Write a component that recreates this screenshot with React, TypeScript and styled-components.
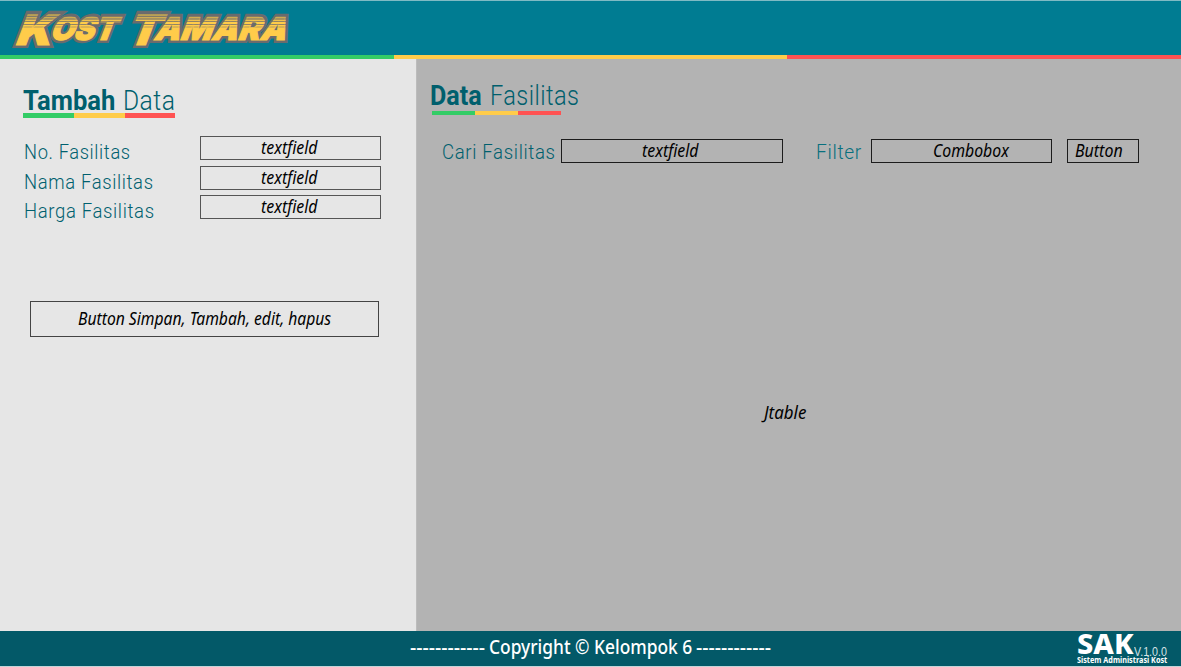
import React, { useLayoutEffect, useRef, useState } from 'react';
import styled, { createGlobalStyle } from 'styled-components';

const gothic = "Roboto, 'Liberation Sans', sans-serif";
const humanist = "'Noto Sans', 'Open Sans', sans-serif";

const GlobalStyle = createGlobalStyle`
  *, *::before, *::after { box-sizing: border-box; }
  html, body { margin: 0; padding: 0; background: #e6e6e6; }
`;

/* Sets a line of type condensed or expanded to a given measure. */
const Measure = styled.span<{ $w: number }>`
  display: block;
  flex: none;
  width: ${(p) => p.$w}px;
  white-space: nowrap;
`;

const Stretched = styled.span`
  display: inline-block;
  vertical-align: top;
  transform-origin: 0 50%;
`;

function Fit({ w, children }: { w: number; children: React.ReactNode }) {
  const ref = useRef<HTMLSpanElement>(null);
  const [scale, setScale] = useState(1);
  useLayoutEffect(() => {
    const update = () => {
      if (ref.current) setScale(w / ref.current.offsetWidth);
    };
    update();
    document.fonts?.ready.then(update);
  }, [w]);
  return (
    <Measure $w={w}>
      <Stretched ref={ref} style={{ transform: `scaleX(${scale})` }}>
        {children}
      </Stretched>
    </Measure>
  );
}

const Page = styled.div`
  width: 1181px;
  height: 667px;
  display: flex;
  flex-direction: column;
  overflow: hidden;
`;

const Header = styled.header`
  height: 55px;
  flex: none;
  background: #007c92;
  border-top: 1px solid #7fbac4;
`;

const Tricolor = styled.div<{ $w: number; $h: number }>`
  flex: none;
  width: ${(p) => p.$w}px;
  height: ${(p) => p.$h}px;
  display: grid;
  grid-template-columns: 1fr 1fr 1fr;
`;

const Band = styled.i<{ $c: string }>`
  background: ${(p) => p.$c};
`;

function Stripe({ w, h }: { w: number; h: number }) {
  return (
    <Tricolor $w={w} $h={h}>
      <Band $c="#33cc66" />
      <Band $c="#ffcc4a" />
      <Band $c="#ff5252" />
    </Tricolor>
  );
}

const Body = styled.main`
  height: 572px;
  flex: none;
  display: flex;
`;

const FormPanel = styled.section`
  width: 416px;
  flex: none;
  padding: 26px 0 0 23px;
  background: #e6e6e6;
`;

const DataPanel = styled.section`
  flex: 1;
  padding: 22px 0 0 12.5px;
  background: #b3b3b3;
  border-left: 1px solid #bcbcbc;
`;

const Title = styled.h1<{ $gap: number; $line?: number }>`
  height: 28px;
  margin: 0;
  display: flex;
  gap: ${(p) => p.$gap}px;
  font: 300 27px/${(p) => p.$line ?? 32}px ${gothic};
  letter-spacing: 0.5px;
  color: #005f6d;
`;

const Strong = styled.b`
  font-weight: 700;
  letter-spacing: 0;
`;

const Underline = styled.div<{ $top?: number; $left?: number }>`
  padding: ${(p) => p.$top ?? 0}px 0 0 ${(p) => p.$left ?? 0}px;
`;

const Fields = styled.div`
  margin-top: 18px;
  display: flex;
  flex-direction: column;
  gap: 5.5px;
`;

const FieldRow = styled.div`
  height: 24px;
  display: grid;
  grid-template-columns: 177.4px 181px;
`;

const Label = styled.label<{ $top?: number; $c?: string }>`
  padding: ${(p) => p.$top ?? 4}px 0 0 1px;
  font: 300 20px/24px ${gothic};
  letter-spacing: 0.7px;
  color: ${(p) => p.$c ?? '#00606e'};
`;

const Box = styled.div<{ $w: number; $h?: number; $line: number; $c?: string }>`
  width: ${(p) => p.$w}px;
  height: ${(p) => p.$h ?? 24}px;
  flex: none;
  display: flex;
  justify-content: center;
  border: 1px solid ${(p) => p.$c ?? '#1c1c1c'};
  font: italic 400 17.3px/${(p) => p.$line}px ${humanist};
  color: #000;
`;

const Actions = styled.div`
  padding: 82px 0 0 7px;
`;

const Toolbar = styled.div`
  height: 24px;
  margin: 24px 0 0 11.5px;
  display: flex;
`;

const Spacer = styled.span<{ $w: number }>`
  flex: none;
  width: ${(p) => p.$w}px;
`;

const TableArea = styled.div`
  height: 460px;
  padding: 238px 0 0 334px;
  font: italic 400 17.3px/24px ${humanist};
  color: #000;
`;

const Footer = styled.footer`
  height: 36px;
  flex: none;
  display: flex;
  padding-left: 410px;
  background: #035968;
  border-bottom: 1px solid #c3d4d8;
  color: #fff;
`;

const Copyright = styled.p`
  margin: 0;
  display: flex;
  gap: 4px;
  font: 500 19.5px/31px ${humanist};
`;

const Brand = styled.div`
  margin-left: 306px;
  padding-top: 2px;
`;

const BrandLine = styled.div`
  height: 22px;
  display: flex;
`;

const Sak = styled.span`
  font: 800 28px/20px ${humanist};
`;

const Version = styled.span`
  padding-top: 13px;
  font: 400 12px/12px 'Liberation Sans', Arial, sans-serif;
  color: #d5e3e6;
`;

const Tagline = styled.div`
  font: 700 8px/10px ${humanist};
`;

const LogoSvg = styled.svg`
  display: block;
`;

const bands = [14, 16.7, 19.4, 22.1, 24.8, 27.3];

function LogoWords() {
  return (
    <g
      fontFamily="Inter, 'Liberation Sans', sans-serif"
      fontWeight="900"
      strokeLinejoin="miter"
      transform="translate(0 45) skewX(-21) translate(0 -45)"
    >
      <text x="14" y="45" fontSize="43" textLength="36" lengthAdjust="spacingAndGlyphs">K</text>
      <text x="47" y="40" fontSize="32" textLength="65" lengthAdjust="spacingAndGlyphs">OST</text>
      <text x="125.5" y="45" fontSize="43" textLength="31" lengthAdjust="spacingAndGlyphs">T</text>
      <text x="151" y="40" fontSize="32" textLength="132" lengthAdjust="spacingAndGlyphs">AMARA</text>
    </g>
  );
}

function Logo() {
  return (
    <LogoSvg width="300" height="54" viewBox="0 1 300 54" role="img" aria-label="Kost Tamara">
      <defs>
        <linearGradient id="gold" gradientUnits="userSpaceOnUse" x1="0" y1="13" x2="0" y2="22">
          <stop offset="0" stopColor="#a08f5a" />
          <stop offset="1" stopColor="#ffcc4a" />
        </linearGradient>
        <clipPath id="bands">
          {bands.map((y) => (
            <rect key={y} x="0" y={y} width="300" height="1.9" />
          ))}
          <rect x="0" y="29.2" width="300" height="20" />
        </clipPath>
      </defs>
      <g fill="#6b6b6d" stroke="#6b6b6d" strokeWidth="6">
        <LogoWords />
      </g>
      <g clipPath="url(#bands)">
        <g fill="url(#gold)" stroke="url(#gold)" strokeWidth="1">
          <LogoWords />
        </g>
      </g>
    </LogoSvg>
  );
}

export default function App() {
  return (
    <>
      <GlobalStyle />
      <Page>
        <Header>
          <Logo />
        </Header>
        <Stripe w={1181} h={4} />
        <Body>
          <FormPanel>
            <Title $gap={8}>
              <Fit w={92}><Strong>Tambah</Strong></Fit>
              <Fit w={52}>Data</Fit>
            </Title>
            <Underline>
              <Stripe w={152.5} h={5} />
            </Underline>
            <Fields>
              <FieldRow>
                <Label><Fit w={107}>No. Fasilitas</Fit></Label>
                <Box $w={181} $line={21} $c="#555"><Fit w={57}>textfield</Fit><Spacer $w={2} /></Box>
              </FieldRow>
              <FieldRow>
                <Label><Fit w={130}>Nama Fasilitas</Fit></Label>
                <Box $w={181} $line={21} $c="#555"><Fit w={57}>textfield</Fit><Spacer $w={2} /></Box>
              </FieldRow>
              <FieldRow>
                <Label><Fit w={130.5}>Harga Fasilitas</Fit></Label>
                <Box $w={181} $line={21} $c="#555"><Fit w={57}>textfield</Fit><Spacer $w={2} /></Box>
              </FieldRow>
            </Fields>
            <Actions>
              <Box $w={349} $h={36} $line={33} $c="#444">
                <Fit w={253}>Button Simpan, Tambah, edit, hapus</Fit>
              </Box>
            </Actions>
          </FormPanel>
          <DataPanel>
            <Title $gap={8} $line={31}>
              <Fit w={52}><Strong>Data</Strong></Fit>
              <Fit w={89}>Fasilitas</Fit>
            </Title>
            <Underline $top={2} $left={2.5}>
              <Stripe w={129} h={4} />
            </Underline>
            <Toolbar>
              <Label $top={1}><Fit w={113.5}>Cari Fasilitas</Fit></Label>
              <Spacer $w={5.5} />
              <Box $w={222} $line={21}><Fit w={57}>textfield</Fit><Spacer $w={3} /></Box>
              <Spacer $w={32} />
              <Label $top={1} $c="#08707e"><Fit w={46}>Filter</Fit></Label>
              <Spacer $w={9} />
              <Box $w={181} $line={22}><Spacer $w={18} /><Fit w={76}>Combobox</Fit></Box>
              <Spacer $w={15} />
              <Box $w={72} $line={22}><Fit w={48}>Button</Fit><Spacer $w={9} /></Box>
            </Toolbar>
            <TableArea><Fit w={42}>Jtable</Fit></TableArea>
          </DataPanel>
        </Body>
        <Footer>
          <Copyright>
            <Fit w={75}>------------</Fit>
            <Fit w={203}>Copyright © Kelompok 6</Fit>
            <Fit w={75}>------------</Fit>
          </Copyright>
          <Brand>
            <BrandLine>
              <Sak><Fit w={57}>SAK</Fit></Sak>
              <Version><Fit w={33}>V.1.0.0</Fit></Version>
            </BrandLine>
            <Tagline><Fit w={90}>Sistem Administrasi Kost</Fit></Tagline>
          </Brand>
        </Footer>
      </Page>
    </>
  );
}
